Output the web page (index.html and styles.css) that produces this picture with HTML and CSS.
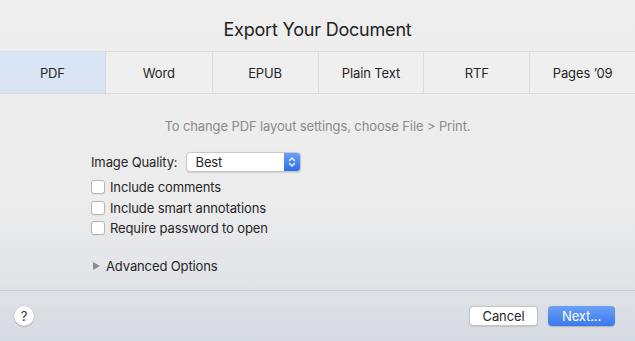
FILE: index.html
```html
<!DOCTYPE html>
<html>
<head>
<meta charset="utf-8">
<link rel="stylesheet" href="styles.css">
</head>
<body>
<div class="dialog">
  <div class="title">Export Your Document</div>
  <div class="tabs">
    <div class="tab active">PDF</div>
    <div class="tab">Word</div>
    <div class="tab">EPUB</div>
    <div class="tab">Plain Text</div>
    <div class="tab">RTF</div>
    <div class="tab">Pages ’09</div>
  </div>
  <div class="hint">To change PDF layout settings, choose File &gt; Print.</div>
  <div class="form">
    <div class="row quality">
      <span class="label">Image Quality:</span>
      <div class="popup">
        <span class="popup-value">Best</span>
        <span class="stepper">
          <svg width="8" height="12" viewBox="0 0 8 12"><path d="M1.5 4.5 L4 2 L6.5 4.5 M1.5 7.5 L4 10 L6.5 7.5" fill="none" stroke="#fff" stroke-width="1.3" stroke-linecap="round" stroke-linejoin="round"/></svg>
        </span>
      </div>
    </div>
    <label class="row check"><span class="box"></span>Include comments</label>
    <label class="row check"><span class="box"></span>Include smart annotations</label>
    <label class="row check"><span class="box"></span>Require password to open</label>
    <div class="row advanced">
      <span class="tri"></span>Advanced Options
    </div>
  </div>
  <div class="footer">
    <div class="help">?</div>
    <div class="buttons">
      <div class="btn cancel">Cancel</div>
      <div class="btn next">Next...</div>
    </div>
  </div>
</div>
</body>
</html>
```
FILE: styles.css
```css
html, body {
  margin: 0;
  padding: 0;
}
body {
  width: 635px;
  height: 341px;
  overflow: hidden;
  font-family: Inter, "Noto Sans", sans-serif;
  font-size: 13px;
  letter-spacing: -0.12px;
  color: #262626;
  background: linear-gradient(180deg, #eeeeee 0px, #ececec 200px, #e3e5e9 270px, #d6dae1 341px);
}
.dialog {
  display: flex;
  flex-direction: column;
  height: 341px;
}
.title {
  height: 51px;
  box-sizing: border-box;
  padding-top: 19px;
  text-align: center;
  font-size: 18px;
  line-height: 22px;
  color: #222;
  letter-spacing: -0.2px;
}
.tabs {
  display: grid;
  grid-template-columns: repeat(6, 1fr);
  height: 41px;
  border-top: 1px solid #dcdcdc;
  border-bottom: 1px solid #dcdcdc;
  background: #efefef;
}
.tab {
  display: flex;
  align-items: center;
  justify-content: center;
  border-left: 1px solid #dcdcdc;
  font-size: 13px;
  color: #262626;
}
.tab:first-child {
  border-left: none;
}
.tab.active {
  background: #d9e5f4;
  border-right: 1px solid #cfd7e2;
}
.tab.active + .tab {
  border-left: none;
}
.hint {
  margin-top: 24px;
  text-align: center;
  color: #8a8a8a;
  font-size: 13px;
  line-height: 16px;
}
.form {
  margin-top: 17px;
  padding-left: 91px;
  display: flex;
  flex-direction: column;
}
.row {
  display: flex;
  align-items: center;
}
.quality {
  height: 22px;
  gap: 8px;
  margin-bottom: 4px;
}
.label {
  color: #262626;
}
.popup {
  display: flex;
  align-items: stretch;
  width: 115px;
  height: 20px;
  box-sizing: border-box;
  border: 1px solid #c9c9c9;
  border-radius: 4px;
  background: #fff;
  box-shadow: 0 0.5px 1px rgba(0,0,0,0.12);
  overflow: hidden;
}
.popup-value {
  flex: 1;
  padding-left: 9px;
  line-height: 18px;
}
.stepper {
  width: 16px;
  display: flex;
  align-items: center;
  justify-content: center;
  background: linear-gradient(180deg, #6aa1f7, #2f6fe6);
}
.check {
  height: 20.5px;
  gap: 5px;
  color: #262626;
}
.box {
  width: 12px;
  height: 12px;
  border: 1px solid #b5b5b5;
  border-radius: 3px;
  background: #fff;
  box-shadow: 0 0.5px 0.5px rgba(0,0,0,0.08);
}
.advanced {
  margin-top: 17px;
  height: 20px;
  padding-left: 2px;
  gap: 6px;
}
.tri {
  width: 0;
  height: 0;
  border-left: 7px solid #8c8c8c;
  border-top: 4.5px solid transparent;
  border-bottom: 4.5px solid transparent;
}
.footer {
  margin-top: 14px;
  border-top: 1px solid #c7ccd3;
  flex: 1;
  display: flex;
  align-items: center;
  justify-content: space-between;
  padding: 0 20px 0 14px;
}
.help {
  width: 20px;
  height: 20px;
  border-radius: 50%;
  background: #fff;
  box-shadow: 0 0.5px 1.5px rgba(0,0,0,0.35);
  display: flex;
  align-items: center;
  justify-content: center;
  font-size: 13px;
  color: #333;
}
.buttons {
  display: flex;
  gap: 10px;
}
.btn {
  height: 20px;
  box-sizing: border-box;
  border-radius: 4px;
  display: flex;
  align-items: center;
  justify-content: center;
  font-size: 13px;
}
.cancel {
  width: 69px;
  background: #fff;
  border: 1px solid #c4c4c4;
  color: #262626;
  box-shadow: 0 0.5px 1px rgba(0,0,0,0.1);
}
.next {
  width: 67px;
  background: linear-gradient(180deg, #6aa0f6, #3a78ec);
  color: #fff;
  box-shadow: 0 0.5px 1px rgba(0,0,0,0.2);
}
```
